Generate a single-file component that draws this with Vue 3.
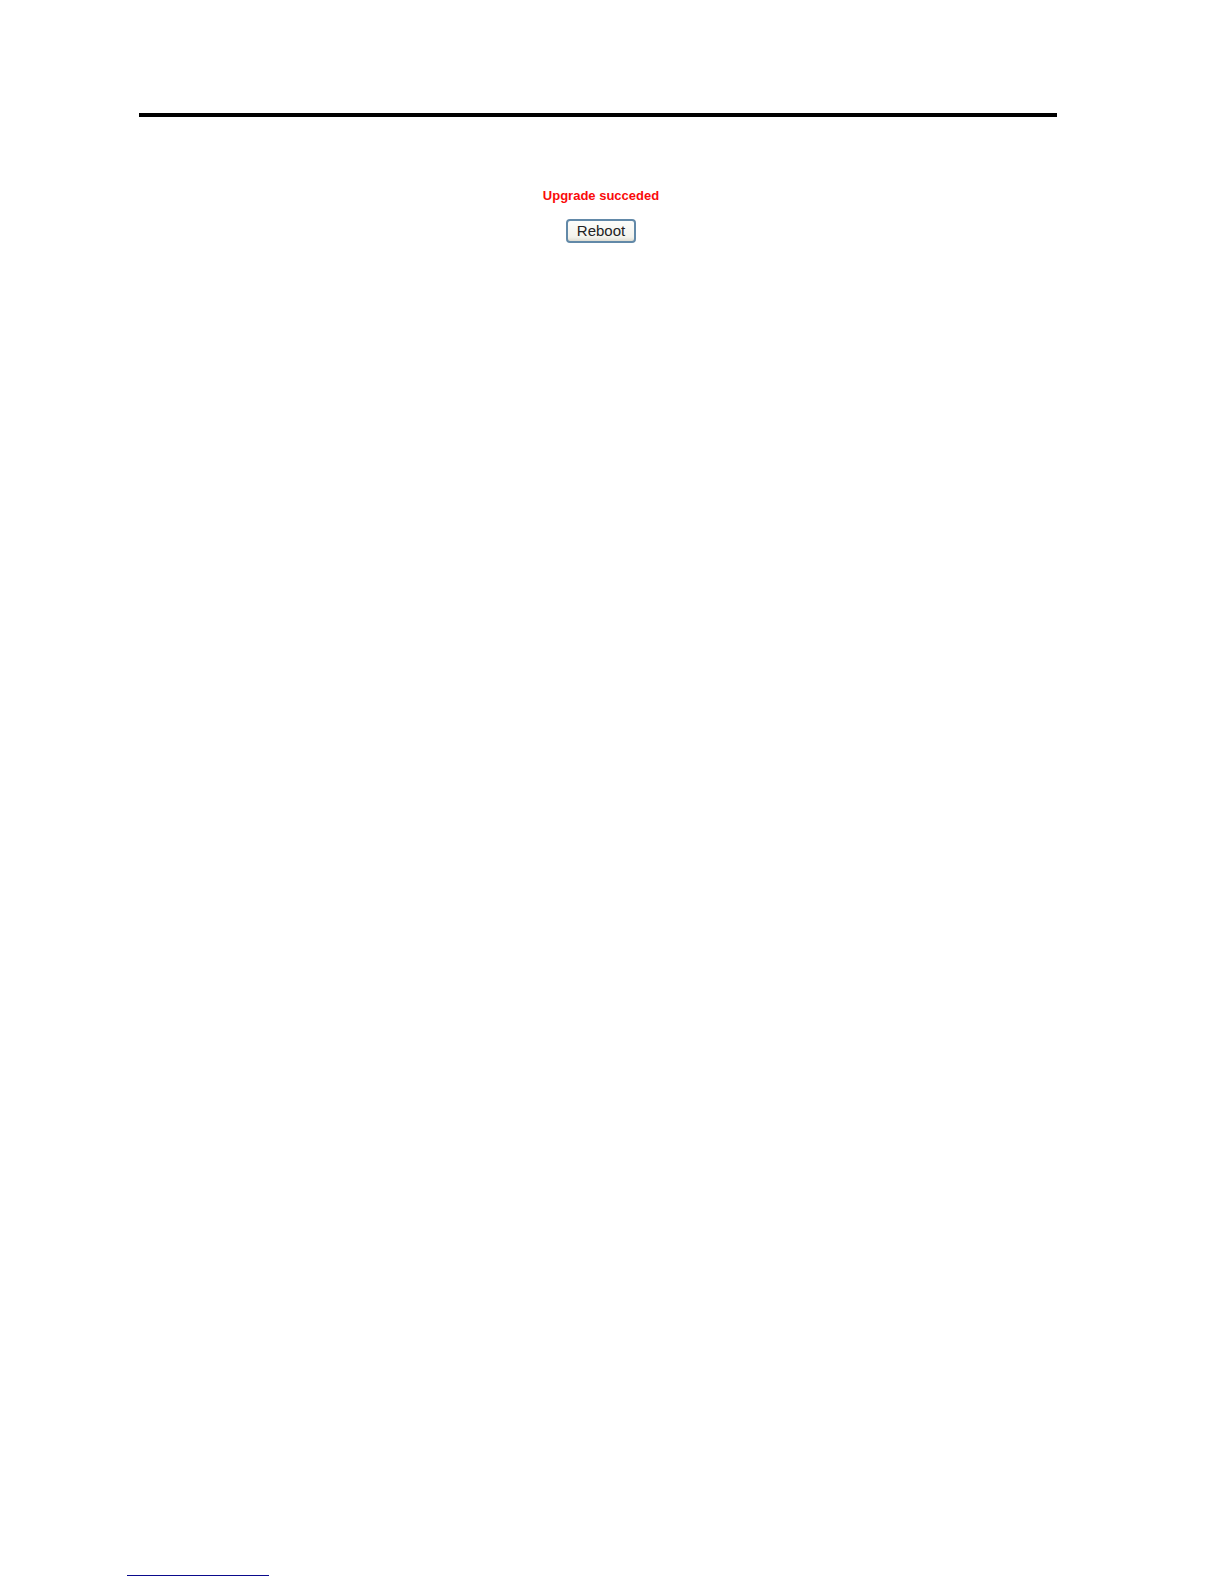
<template>
  <div class="page">
    <hr class="top-rule">

    <main class="result">
      <p class="message" role="status">{{ message }}</p>
      <button type="button" class="reboot-btn">Reboot</button>
    </main>

    <footer class="page-footer">
      <div class="footer-line"></div>
    </footer>
  </div>
</template>

<script setup>
const message = 'Upgrade succeded'
</script>

<style>
body {
  margin: 0;
  background: #fff;
}
</style>

<style scoped>
.page {
  display: flex;
  flex-direction: column;
  box-sizing: border-box;
  min-height: 100vh;
  padding: 113px 167px 8px 127px;
  font-family: Arial, "Liberation Sans", sans-serif;
}

.top-rule {
  align-self: stretch;
  height: 4px;
  margin: 0 0 0 12px;
  border: none;
  background: #000;
}

/* 升级结果 */
.result {
  display: flex;
  flex-direction: column;
  align-items: center;
  gap: 15px;
  margin-top: 71px;
  padding-left: 18px;
}

.message {
  margin: 0;
  color: #fa0a0a;
  font-size: 13px;
  font-weight: bold;
  line-height: 16px;
}

.reboot-btn {
  box-sizing: border-box;
  height: 24px;
  padding: 0 9px;
  border: 2px solid #6289a8;
  border-radius: 4px;
  background: linear-gradient(#fdfdfb, #f3f3ed 80%, #dfddd3);
  color: #222;
  font-family: inherit;
  font-size: 15px;
  line-height: 18px;
  cursor: pointer;
}

.reboot-btn:active {
  background: #e5e4dc;
}

/* 页脚短线 */
.page-footer {
  margin-top: auto;
}

.footer-line {
  width: 142px;
  border-top: 1px solid #0a0a8c;
}
</style>
